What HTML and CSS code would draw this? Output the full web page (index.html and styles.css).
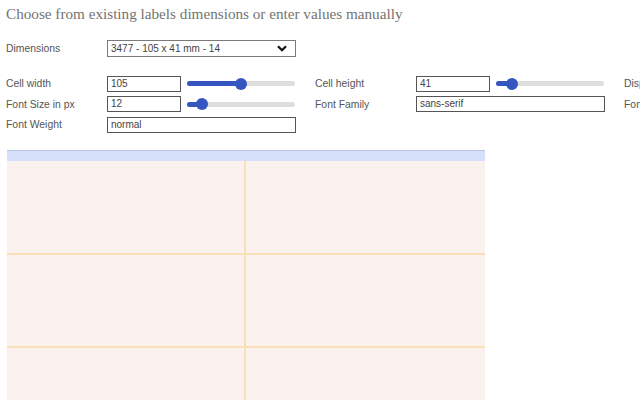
FILE: index.html
```html
<!DOCTYPE html>
<html>
<head>
<meta charset="utf-8">
<link rel="stylesheet" href="styles.css">
</head>
<body>
<div class="page">
  <h1 class="title">Choose from existing labels dimensions or enter values manually</h1>

  <div class="dims">
    <span class="label">Dimensions</span>
    <div class="select">
      <span>3477 - 105 x 41 mm - 14</span>
      <svg class="chev" width="10" height="7" viewBox="0 0 10 7"><path d="M1 1.2 L5 5.2 L9 1.2" fill="none" stroke="#111" stroke-width="2.2"/></svg>
    </div>
  </div>

  <div class="fields">
    <div class="group">
      <span class="label">Cell width</span>
      <div class="ctrl">
        <div class="input short">105</div>
        <div class="slider"><div class="fill" style="width:50%"></div><div class="thumb" style="left:50%"></div></div>
      </div>
      <span class="label">Font Size in px</span>
      <div class="ctrl">
        <div class="input short">12</div>
        <div class="slider"><div class="fill" style="width:14%"></div><div class="thumb" style="left:14%"></div></div>
      </div>
      <span class="label">Font Weight</span>
      <div class="ctrl">
        <div class="input">normal</div>
      </div>
    </div>
    <div class="group">
      <span class="label">Cell height</span>
      <div class="ctrl">
        <div class="input short">41</div>
        <div class="slider"><div class="fill" style="width:15%"></div><div class="thumb" style="left:15%"></div></div>
      </div>
      <span class="label">Font Family</span>
      <div class="ctrl">
        <div class="input">sans-serif</div>
      </div>
    </div>
    <div class="group">
      <span class="label">Display border</span>
      <div class="ctrl"></div>
      <span class="label">Font color</span>
      <div class="ctrl"></div>
    </div>
  </div>

  <div class="sheet">
    <div class="sheet-bar"></div>
    <div class="cells">
      <div class="cell"></div><div class="cell"></div>
      <div class="cell"></div><div class="cell"></div>
      <div class="cell"></div><div class="cell"></div>
    </div>
  </div>
</div>
</body>
</html>
```
FILE: styles.css
```css
html, body {
  margin: 0;
  padding: 0;
  background: #fff;
  overflow: hidden;
  width: 640px;
  height: 400px;
}
.page {
  padding: 0 6px;
  font-family: "Liberation Sans", Arial, sans-serif;
  font-size: 10px;
  color: #333;
  width: 1000px;
}
.title {
  margin: 0;
  height: 28px;
  line-height: 28px;
  font-family: "Liberation Serif", "Times New Roman", serif;
  font-size: 15.2px;
  font-weight: normal;
  color: #737373;
}
.dims {
  margin-top: 12px;
  display: flex;
  align-items: center;
  height: 17px;
}
.label {
  width: 101px;
  flex: none;
  font-size: 10.4px;
  color: #555;
  display: flex;
  align-items: center;
  white-space: nowrap;
}
.select {
  width: 189px;
  height: 17px;
  box-sizing: border-box;
  border: 1px solid #7a7a7a;
  display: flex;
  align-items: center;
  justify-content: space-between;
  padding: 0 8px 0 3px;
  font-size: 10px;
  color: #444;
}
.chev { display: block; }
.fields {
  margin-top: 18px;
  display: flex;
  gap: 19px;
}
.group {
  display: grid;
  grid-template-columns: 101px 189px;
  grid-auto-rows: 17px;
  row-gap: 3.5px;
}
.ctrl {
  display: flex;
  align-items: center;
  gap: 6px;
}
.input {
  box-sizing: border-box;
  width: 189px;
  height: 16px;
  border: 1px solid #555;
  padding: 0 3px;
  font-size: 10px;
  line-height: 14px;
  color: #444;
}
.input.short { width: 74px; }
.slider {
  position: relative;
  width: 108px;
  height: 5px;
  border-radius: 3px;
  background: #dedede;
}
.fill {
  height: 100%;
  border-radius: 3px;
  background: #3556c0;
}
.thumb {
  position: absolute;
  top: 50%;
  width: 12px;
  height: 12px;
  margin: -6px 0 0 -6px;
  border-radius: 50%;
  background: #3556c0;
}
.sheet {
  margin-top: 17px;
  margin-left: 1px;
  width: 478px;
}
.sheet-bar {
  height: 10px;
  background: #d6e0fb;
  border-top: 1px solid #b9c4e2;
}
.cells {
  display: grid;
  grid-template-columns: 239px 239px;
  grid-auto-rows: 93.5px;
  background: #fbf2f0;
}
.cell {
  border-right: 2px solid #f8e1b8;
  border-bottom: 2px solid #f8e1b8;
}
.cell:nth-child(2n) { border-right: none; }
```
